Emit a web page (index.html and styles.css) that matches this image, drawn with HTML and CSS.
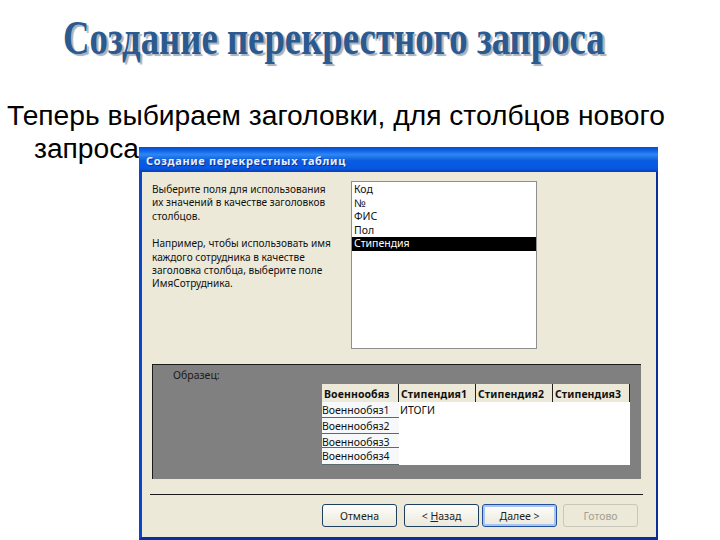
FILE: index.html
```html
<!DOCTYPE html>
<html lang="ru">
<head>
<meta charset="utf-8">
<title>Создание перекрестного запроса</title>
<link rel="stylesheet" href="styles.css">
</head>
<body>
<main class="slide">
  <h1 class="slide-title">Создание перекрестного запроса</h1>
  <p class="slide-text">Теперь выбираем заголовки, для столбцов нового<br>запроса</p>

  <section class="window">
    <header class="titlebar">Создание перекрестных таблиц</header>
    <div class="client">
      <div class="top">
        <div class="intro">
          <p>Выберите поля для использования<br>их значений в качестве заголовков<br>столбцов.</p>
          <p>Например, чтобы использовать имя<br>каждого сотрудника в качестве<br>заголовка столбца, выберите поле<br>ИмяСотрудника.</p>
        </div>
        <ul class="fields">
          <li>Код</li>
          <li class="num">№</li>
          <li>ФИС</li>
          <li>Пол</li>
          <li class="selected">Стипендия</li>
        </ul>
      </div>

      <div class="sample">
        <div class="sample-label">Образец:</div>
        <div class="grid">
          <div class="head">Военнообяз</div>
          <div class="head">Стипендия1</div>
          <div class="head">Стипендия2</div>
          <div class="head">Стипендия3</div>
          <div class="row-name">Военнообяз1</div>
          <div class="values">ИТОГИ</div>
          <div class="row-name">Военнообяз2</div>
          <div class="row-name">Военнообяз3</div>
          <div class="row-name">Военнообяз4</div>
        </div>
      </div>

      <div class="divider"></div>

      <div class="buttons">
        <button class="btn cancel">Отмена</button>
        <button class="btn"><span>&lt; <u>Н</u>азад</span></button>
        <button class="btn default"><span><u>Д</u>алее &gt;</span></button>
        <button class="btn disabled">Готово</button>
      </div>
    </div>
  </section>
</main>
</body>
</html>
```
FILE: styles.css
```css
html, body {
  margin: 0;
  padding: 0;
  background: #fff;
}

.slide {
  position: relative;
  width: 720px;
  height: 540px;
  overflow: hidden;
  font-family: "Liberation Sans", Arial, sans-serif;
  color: #000;
}

.slide-title {
  margin: 0;
  padding: 13px 0 0 63px;
  height: 75px;
  box-sizing: border-box;
  font-family: "Liberation Serif", "Times New Roman", serif;
  font-size: 48px;
  line-height: 50px;
  font-weight: 700;
  white-space: nowrap;
  color: #2a5a90;
  text-shadow: 3px 2px 1px #a9b2bd;
  transform: scaleX(0.766);
  transform-origin: 63px 0;
}

.slide-text {
  margin: 24px 0 0;
  padding-left: 34px;
  text-indent: -27px;
  font-size: 28.2px;
  line-height: 33px;
  white-space: nowrap;
}

.window {
  position: absolute;
  left: 139px;
  top: 147px;
  width: 519px;
  height: 393px;
  display: flex;
  flex-direction: column;
  box-sizing: border-box;
  border-left: 3px solid #0a45c8;
  border-right: 2px solid #0a2f9c;
  border-bottom: 3px solid #0a2f9c;
  background: #ece9d8;
  font-family: "Noto Sans", Tahoma, sans-serif;
  font-size: 10.5px;
  color: #111;
}

.titlebar {
  height: 25px;
  margin-left: -3px;
  margin-right: -2px;
  padding-left: 7px;
  box-sizing: border-box;
  background: linear-gradient(#0a4fc8 0, #0a5ee6 12%, #2f86f2 30%, #0a5ce0 55%, #0657e4 85%, #0a3fb0 100%);
  color: #e8f0ff;
  font-size: 11px;
  font-weight: 700;
  letter-spacing: 0.65px;
  line-height: 27px;
  text-shadow: 1px 1px 0 #0a2f8c;
}

.client {
  flex: 1;
  display: flex;
  flex-direction: column;
  min-height: 0;
}

.top {
  display: flex;
  height: 192px;
  padding: 9px 0 0 10px;
  box-sizing: border-box;
}

.intro {
  width: 199px;
  font-size: 10.1px;
  line-height: 13.4px;
  padding-top: 2px;
}

.intro p {
  margin: 0 0 14px;
  white-space: nowrap;
}

.fields {
  list-style: none;
  margin: 0;
  padding: 1px 0 0;
  width: 186px;
  height: 168px;
  box-sizing: border-box;
  background: #fff;
  border: 1px solid #8f8f8f;
}

.fields li {
  height: 13.5px;
  line-height: 13.5px;
  padding-left: 2px;
}

.fields .num {
  font-family: "Liberation Sans", Arial, sans-serif;
  font-size: 11px;
}

.fields .selected {
  background: #000;
  color: #fff;
}

.sample {
  position: relative;
  height: 115px;
  margin: 0 15px 0 10px;
  box-sizing: border-box;
  padding: 19px 0 0 169px;
  background: #808080;
  border-top: 1px solid #1c1c1c;
  border-left: 1px solid #1c1c1c;
}

.sample-label {
  position: absolute;
  left: 20px;
  top: 3px;
  color: #1a1a1a;
}

.grid {
  display: grid;
  grid-template-columns: 77px 77px 77px 77px;
  grid-template-rows: 18px 16px 16px 14px 17px;
  width: 308px;
  background: #fff;
}

.head {
  background: #ece9d8;
  border-right: 1px solid #222;
  padding-left: 2px;
  line-height: 20px;
  font-weight: 700;
  letter-spacing: 0.1px;
  white-space: nowrap;
  overflow: hidden;
}

.row-name {
  grid-column: 1;
  background: #f6f8fa;
  border-bottom: 1px solid #5a6a70;
  line-height: 17px;
  white-space: nowrap;
  overflow: hidden;
}

.values {
  grid-column: 2 / 5;
  grid-row: 2 / 6;
  padding-left: 1px;
  line-height: 17px;
  background: #fff;
}

.divider {
  height: 1px;
  margin: 15px 13px 0 8px;
  background: #1a1a1a;
}

.buttons {
  display: flex;
  justify-content: flex-end;
  gap: 6px;
  padding: 9px 18px 0 0;
}

.btn {
  width: 75px;
  height: 23px;
  padding: 0;
  box-sizing: border-box;
  border: 1px solid #1f3f5f;
  border-radius: 3px;
  background: linear-gradient(#fdfdfa, #ece9dc);
  color: #222;
  font: inherit;
}

.btn.cancel {
  margin-right: 1px;
}

.btn.default {
  border-color: #1f4f9f;
  box-shadow: inset 0 0 0 2px #a9c4ee;
  margin-left: -3px;
}

.btn.disabled {
  border-color: #c9c7ba;
  background: #ece9d8;
  color: #a3a194;
}
```
